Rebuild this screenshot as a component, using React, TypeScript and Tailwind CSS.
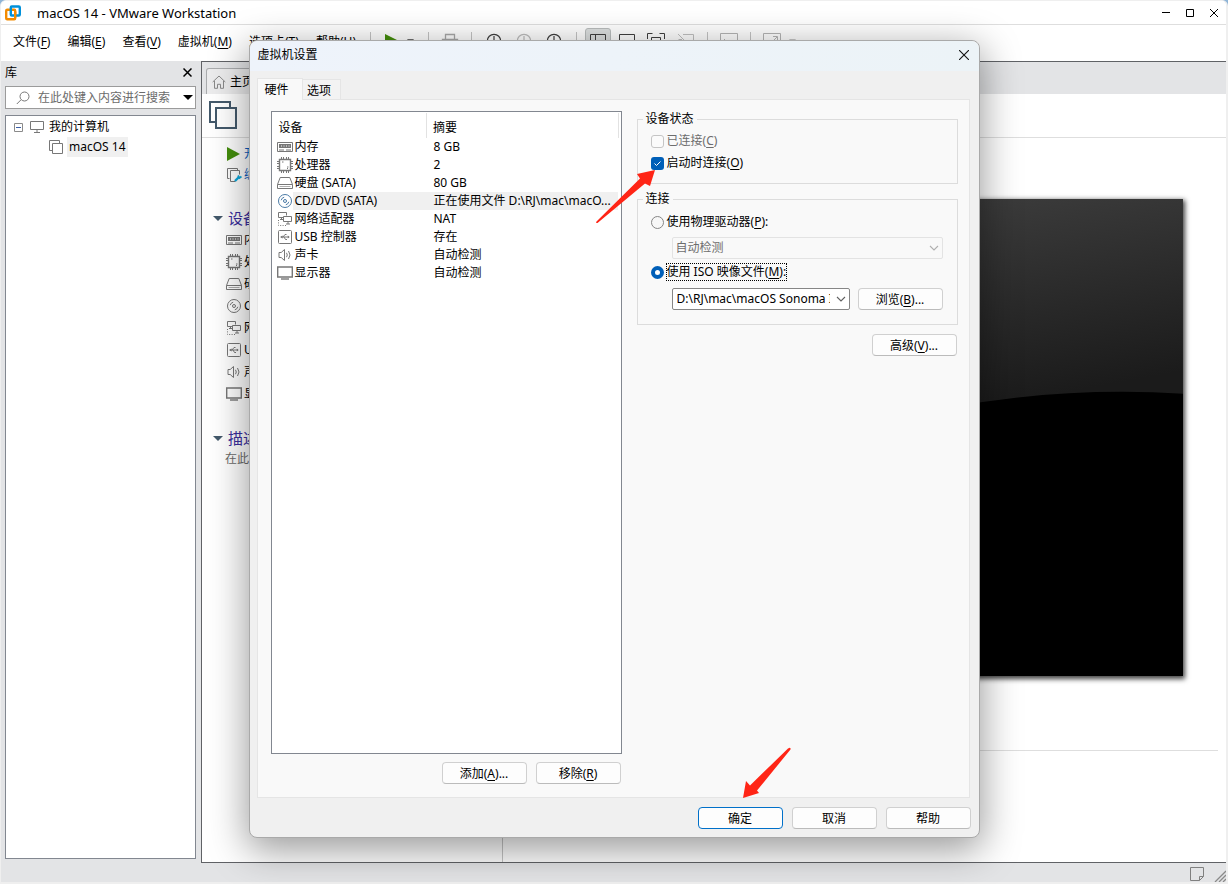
import type { ReactNode } from "react";

type DeviceKind = "memory" | "cpu" | "disk" | "cd" | "network" | "usb" | "sound" | "display";

interface Device {
  kind: DeviceKind;
  name: string;
  summary: string;
}

const devices: Device[] = [
  { kind: "memory", name: "内存", summary: "8 GB" },
  { kind: "cpu", name: "处理器", summary: "2" },
  { kind: "disk", name: "硬盘 (SATA)", summary: "80 GB" },
  { kind: "cd", name: "CD/DVD (SATA)", summary: "正在使用文件 D:\\RJ\\mac\\macO..." },
  { kind: "network", name: "网络适配器", summary: "NAT" },
  { kind: "usb", name: "USB 控制器", summary: "存在" },
  { kind: "sound", name: "声卡", summary: "自动检测" },
  { kind: "display", name: "显示器", summary: "自动检测" },
];

const menus = [
  { label: "文件", hotkey: "F" },
  { label: "编辑", hotkey: "E" },
  { label: "查看", hotkey: "V" },
  { label: "虚拟机", hotkey: "M" },
  { label: "选项卡", hotkey: "T" },
  { label: "帮助", hotkey: "H" },
];

function Hotkey({ label, hotkey, tail = "" }: { label: string; hotkey: string; tail?: string }) {
  return (
    <span className="whitespace-nowrap">
      {label}(<u className="underline-offset-2">{hotkey}</u>){tail}
    </span>
  );
}

function DeviceIcon({ kind }: { kind: DeviceKind }) {
  const shapes: Record<DeviceKind, ReactNode> = {
    memory: (
      <>
        <path d="M.5 3.5h15v9H.5z" />
        <path d="M2 5h12v4H2z" fill="currentColor" stroke="none" />
        <path d="M4 7h1m1.500 0h1m1.500 0h1m1.500 0h1" stroke="#fff" />
        <path d="M2 11h5m2 0h5" />
      </>
    ),
    cpu: (
      <>
        <path d="M2.500 2.500h11v11h-11z" strokeWidth="1.400" />
        <path d="M4.500 0v2m2-2v2m3-2v2m2-2v2m-7 12v2m2-2v2m3-2v2m2-2v2M0 4.500h2m-2 2h2m-2 3h2m-2 2h2m12-7h2m-2 2h2m-2 3h2m-2 2h2" />
        <path d="M5 5h1.500M10 10h1.500M10 11.500h1" />
      </>
    ),
    disk: (
      <>
        <path d="M3.200 2.500h9.600l2.700 7v4H.5v-4z" />
        <path d="M.5 9.500h15" />
        <path d="M2.500 11.500h11" opacity=".6" />
      </>
    ),
    cd: (
      <>
        <circle cx="8" cy="8" r="6.500" />
        <circle cx="8" cy="8" r="1.500" />
        <path d="M4.200 7.200a4 4 0 0 1 3-3M11.800 8.800a4 4 0 0 1-3 3" />
      </>
    ),
    network: (
      <>
        <path d="M6.500 6.500h-5v-5h8v3M3 8.500h3M4.500 6.500v2" />
        <path d="M6.500 5.500h8v5h-8zM9 13h4m-2-2.500V13" />
        <path d="M1.500 9v5.500H10" strokeDasharray="1 1.400" />
      </>
    ),
    usb: (
      <>
        <rect x="1.500" y="1.500" width="13" height="13" rx="1" />
        <path d="M4 8h8M6 8l2-2.500h1.500M7 8l1.500 2.500H10" />
        <path d="M5.600 6.600v2.800L3 8zM10.800 6.600v2.800l1.900-1.400z" fill="currentColor" stroke="none" />
      </>
    ),
    sound: (
      <>
        <path d="M2 5.500h2.200l3.300-3v11l-3.300-3H2z" />
        <path d="M9.500 5.800q1.600 2.200 0 4.400M11.500 4q3 4 0 8" />
      </>
    ),
    display: (
      <>
        <path d="M.7 2h14.600v10H.7z" strokeWidth="1.400" />
        <path d="M4 14h8" strokeWidth="1.400" />
      </>
    ),
  };

  return (
    <svg viewBox="0 0 16 16" className="size-4 shrink-0" fill="none" stroke="currentColor">
      {shapes[kind]}
    </svg>
  );
}

function StackIcon({ className }: { className: string }) {
  return (
    <svg viewBox="0 0 14 14" className={className} fill="none" stroke="currentColor">
      <path d="M3 10.500H.5V.5h10V3" />
      <path d="M3.500 3.500h10v10h-10z" />
    </svg>
  );
}

function Chevron({ className }: { className: string }) {
  return (
    <svg viewBox="0 0 10 6" className={className} fill="none" stroke="currentColor" strokeWidth="1.100">
      <path d="M1 1l4 4 4-4" />
    </svg>
  );
}

function Caret({ className }: { className: string }) {
  return (
    <svg viewBox="0 0 10 5" className={className} fill="currentColor">
      <path d="M0 0h10L5 5z" />
    </svg>
  );
}

function Divider() {
  return <span className="h-[18px] w-px shrink-0 bg-[#c4c4c4]" />;
}

function ClockIcon({ className }: { className: string }) {
  return (
    <svg viewBox="0 0 16 16" className={className} fill="none" stroke="currentColor" strokeWidth="1.200">
      <circle cx="8" cy="8" r="6.700" />
      <path d="M8 3v5h3" />
    </svg>
  );
}

function Toolbar() {
  return (
    <div className="flex items-center overflow-hidden pb-0.5 text-[#3f3f3f]">
      <Divider />
      <button aria-label="播放" className="ml-3.5 flex items-center gap-2">
        <svg viewBox="0 0 14 16" className="h-4 w-3.5 text-[#448f0c]" fill="currentColor">
          <path d="M0 1l14 7-14 7z" />
        </svg>
        <Caret className="h-1 w-[7px]" />
      </button>
      <span className="w-3.5" />
      <Divider />
      <button aria-label="发送按键" className="mx-3 text-[#a8a8a8]">
        <svg viewBox="0 0 18 16" className="h-4 w-[18px]" fill="none" stroke="currentColor" strokeWidth="1.300">
          <path d="M4.500 6V1.500h9V6M1.500 13V6.500h15V13z" />
        </svg>
      </button>
      <Divider />
      <div className="mx-3.5 flex gap-3.5">
        <button aria-label="拍摄快照"><ClockIcon className="size-4" /></button>
        <button aria-label="恢复快照" className="text-[#bdbdbd]"><ClockIcon className="size-4" /></button>
        <button aria-label="管理快照"><ClockIcon className="size-4" /></button>
      </div>
      <Divider />
      <button aria-label="显示库" className="mx-2 flex h-[27px] w-[26px] items-center justify-center rounded-[3px] border border-[#b9bdbd] bg-[#dcdfdf]">
        <svg viewBox="0 0 16 14" className="h-3.5 w-4" fill="none" stroke="currentColor">
          <path d="M.5.500h15v13H.5zM5.500.500v13" />
        </svg>
      </button>
      <button aria-label="缩略图栏">
        <svg viewBox="0 0 16 14" className="h-3.5 w-4" fill="none" stroke="currentColor">
          <path d="M.5.500h15v13H.5z" />
        </svg>
      </button>
      <button aria-label="全屏" className="ml-3">
        <svg viewBox="0 0 18 16" className="h-4 w-[18px]" fill="none" stroke="currentColor">
          <path d="M.5 6V.500h5M12.500.500h5V6M.5 10v5.500h5M12.500 15.500h5V10M4.500 4.500h9v7h-9z" />
        </svg>
      </button>
      <button aria-label="Unity" className="ml-3 text-[#c0c0c0]">
        <svg viewBox="0 0 18 16" className="h-4 w-[18px]" fill="none" stroke="currentColor">
          <path d="M6 1.500h10.500v9M1 1l14 14M1.500 6.500v8h9M2 6.500h3" />
        </svg>
      </button>
      <span className="w-3" />
      <Divider />
      <button aria-label="控制台" className="mx-3 text-[#b5b5b5]">
        <svg viewBox="0 0 18 16" className="h-4 w-[18px]" fill="none" stroke="currentColor">
          <path d="M.5.500h17v15H.5zM4 6l3 3-3 3" />
        </svg>
      </button>
      <Divider />
      <button aria-label="拉伸" className="ml-3 flex items-center gap-2 text-[#b5b5b5]">
        <svg viewBox="0 0 18 16" className="h-4 w-[18px]" fill="none" stroke="currentColor">
          <path d="M.5.500h17v15H.5zM10 3.500h4.500V8M14 4L9 9" />
        </svg>
        <Caret className="h-1 w-[7px]" />
      </button>
    </div>
  );
}

function TitleBar() {
  return (
    <header className="flex h-6 items-center border-b border-[#dedede] bg-white pr-2 pl-1">
      <svg viewBox="0 0 16 16" className="size-4" fill="none" strokeWidth="2.400">
        <rect x="1.200" y="4.800" width="9" height="9.500" rx="1" stroke="#f38b00" />
        <rect x="5.800" y="1.500" width="9" height="9" rx="1" stroke="#0091da" />
        <path d="M10.200 6.500v6" stroke="#f38b00" />
      </svg>
      <h1 className="ml-4 flex-1 text-[13px]">macOS 14 - VMware Workstation</h1>
      <div className="flex gap-4">
        <button aria-label="最小化">
          <svg viewBox="0 0 8 8" className="size-2" stroke="#000"><path d="M0 3.500h8" /></svg>
        </button>
        <button aria-label="最大化">
          <svg viewBox="0 0 8 8" className="size-2" fill="none" stroke="#000"><path d="M.5.500h7v7h-7z" /></svg>
        </button>
        <button aria-label="关闭">
          <svg viewBox="0 0 8 8" className="size-2" stroke="#000"><path d="M0 0l8 8M8 0L0 8" /></svg>
        </button>
      </div>
    </header>
  );
}

function Sidebar() {
  return (
    <aside className="flex w-[200px] shrink-0 flex-col bg-[#e3e4e6] pr-[5px] pb-1 pl-1">
      <div className="flex h-[25px] items-center justify-between pr-1 pb-0.5">
        <h2>库</h2>
        <button aria-label="关闭库">
          <svg viewBox="0 0 9 9" className="size-[9px]" stroke="#000" strokeWidth="1.500"><path d="M.5.500l8 8M8.500.500l-8 8" /></svg>
        </button>
      </div>
      <div className="flex h-[23px] items-center border border-[#9b9b9b] bg-white pr-0.5 pl-2.5">
        <svg viewBox="0 0 14 14" className="size-3.5 shrink-0" fill="none" stroke="#777">
          <circle cx="8.500" cy="5.500" r="4.500" />
          <path d="M5 8.800L.8 13" />
        </svg>
        <input
          aria-label="搜索"
          placeholder="在此处键入内容进行搜索"
          className="ml-2 min-w-0 flex-1 bg-transparent outline-none placeholder:text-[#6b6b6b]"
        />
        <Caret className="h-[5px] w-2.5 shrink-0" />
      </div>
      <ul className="mt-1.5 flex-1 border border-[#828790] bg-white pt-px">
        <li className="flex h-5 items-center pl-2">
          <svg viewBox="0 0 9 9" className="size-[9px]" fill="none" stroke="#8a8a8a">
            <path d="M.5.500h8v8h-8z" />
            <path d="M2 4.500h5" stroke="#3b5fa8" />
          </svg>
          <svg viewBox="0 0 14 12" className="ml-[7px] h-3 w-3.5" fill="none" stroke="#777">
            <path d="M.5.500h13v8H.5zM7 8.500v3M4 11.500h6" />
          </svg>
          <span className="ml-[5px]">我的计算机</span>
        </li>
        <li className="flex h-5 items-center pl-[43px]">
          <StackIcon className="size-3.5 text-[#777]" />
          <span className="ml-1 bg-[#f0f0f0] px-0.5 leading-5">macOS 14</span>
        </li>
      </ul>
    </aside>
  );
}

function Workspace() {
  return (
    <main className="flex min-w-0 flex-1 flex-col border-y border-l border-[#606266] bg-white">
      <div className="flex h-8 items-end bg-[#e3e4e6] pl-1">
        <a href="#home" className="flex h-[26px] w-[90px] items-center gap-1 rounded-t-[3px] border border-b-0 border-[#aaacae] bg-[#ececed] pl-[5px]">
          <svg viewBox="0 0 14 14" className="size-3.5" fill="none" stroke="#888">
            <path d="M.7 7L7 1l6.300 6M2.500 6v7.300h3v-4h3v4h3V6" />
          </svg>
          <span>主页</span>
        </a>
      </div>
      <div className="flex h-11 items-center border-b border-[#dedede] pb-0.5 pl-[7px]">
        <StackIcon className="size-7 text-[#43596b]" />
      </div>
      <div className="flex flex-1">
        <section className="w-[301px] shrink-0 border-r border-[#c6c6c6] pt-[5px]">
          <div className="flex flex-col pl-6 text-[#0b5cc0]">
            <a href="#power-on" className="flex h-[21px] items-center gap-1">
              <svg viewBox="0 0 14 14" className="size-3.5 text-[#448f0c]" fill="currentColor"><path d="M1 0l13 7-13 7z" /></svg>
              开启此虚拟机
            </a>
            <a href="#edit" className="flex h-[21px] items-center gap-0.5">
              <svg viewBox="0 0 16 16" className="size-4" fill="none" stroke="#777">
                <path d="M3.500 11.500h-2v-10h10v2M9.500 14.500h-5v-11h9v4" />
                <path d="M9 14l4-4" stroke="#0aa7dc" strokeWidth="2.400" />
                <path d="M12 8.500l1.500 2.500 2-1.500" stroke="#0aa7dc" strokeWidth="1.800" />
              </svg>
              编辑虚拟机设置
            </a>
          </div>
          <h2 className="mt-[22px] flex h-[22px] items-center gap-[5px] pl-[11px] text-[15px] text-[#3b2f9e]">
            <Caret className="h-[5px] w-2.5 text-[#43596b]" />
            设备
          </h2>
          <ul className="pl-6 text-[#777]">
            {devices.map((device) => (
              <li key={device.kind} className="flex h-[22px] items-center gap-0.5">
                <DeviceIcon kind={device.kind} />
                <span className="text-black">{device.name}</span>
              </li>
            ))}
          </ul>
          <h2 className="mt-[22px] flex h-[22px] items-center gap-[5px] pl-[11px] text-[15px] text-[#3b2f9e]">
            <Caret className="h-[5px] w-2.5 text-[#43596b]" />
            描述
          </h2>
          <p className="pl-[23px] leading-5 text-[#6b6b6b]">在此处键入对该虚拟机的描述。</p>
        </section>
        <section className="min-w-0 flex-1">
          <div className="mr-[43px] ml-11 pt-[61px]">
            <svg viewBox="0 0 637 478" className="w-full shadow-[1px_2px_5px_1px_rgba(0,0,0,0.75)]">
              <defs>
                <linearGradient id="screen" x1="0.3" y1="0" x2="0.42" y2="0.5">
                  <stop offset="0" stopColor="#424242" />
                  <stop offset="1" stopColor="#1b1b1b" />
                </linearGradient>
              </defs>
              <path d="M0 0h637v478H0z" fill="url(#screen)" />
              <path d="M0 369Q288 193 576 193Q607 193 637 195V478H0z" />
            </svg>
          </div>
          <hr className="mt-[74px] mr-2 border-[#dedede]" />
        </section>
      </div>
    </main>
  );
}

function StatusBar() {
  return (
    <footer className="flex h-[19px] items-end justify-end gap-2.5 bg-[#e3e4e6]">
      <svg viewBox="0 0 14 14" className="mb-px size-3.5" fill="none" stroke="#808080">
        <path d="M.5.500h13v9l-4 4h-9zM13.500 9.500h-4v4" />
      </svg>
      <svg viewBox="0 0 12 12" className="size-3" stroke="#8a8a8a" strokeWidth="1.300">
        <path d="M1 12L12 1M5 12l7-7M9 12l3-3" />
      </svg>
    </footer>
  );
}

function DialogButton({ children, primary = false }: { children: ReactNode; primary?: boolean }) {
  return (
    <button
      className={
        primary
          ? "h-[22px] w-[85px] rounded-[4px] border border-[#0070c9] bg-[#fdfdfd] pt-0.5"
          : "h-[22px] w-[85px] rounded-[4px] border border-[#d0d0d0] border-b-[#bbb] bg-[#fdfdfd] pt-0.5"
      }
    >
      {children}
    </button>
  );
}

function DeviceTable() {
  return (
    <div className="h-[643px] border border-[#828790] bg-white pt-px pr-0.5">
      <table className="w-full table-fixed border-collapse text-left">
        <thead>
          <tr className="h-[25px]">
            <th className="w-[155px] border-r border-[#e2e2e2] pt-1 pl-[7px] font-normal">设备</th>
            <th className="border-r border-[#e2e2e2] pt-1 pl-1.5 font-normal">摘要</th>
          </tr>
        </thead>
        <tbody>
          {devices.map((device) => {
            const selected = device.kind === "cd";
            return (
              <tr key={device.kind} className="h-[18px]">
                <td className="p-0">
                  <div className="flex h-[18px] items-center pl-[5px]">
                    <span className={selected ? "text-[#4c7ba6]" : "text-[#777]"}>
                      <DeviceIcon kind={device.kind} />
                    </span>
                    <span className={selected ? "flex-1 bg-[#f0f0f0] pl-0.5 leading-[18px]" : "flex-1 pl-0.5 leading-[18px]"}>
                      {device.name}
                    </span>
                  </div>
                </td>
                <td className={selected ? "truncate bg-[#f0f0f0] py-0 pl-[7px]" : "truncate py-0 pl-[7px]"}>
                  {device.summary}
                </td>
              </tr>
            );
          })}
        </tbody>
      </table>
    </div>
  );
}

function DevicePane() {
  const radio = "size-[13px] shrink-0 appearance-none rounded-full";
  return (
    <div className="flex min-w-0 flex-1 flex-col">
      <fieldset className="border border-[#dcdcdc] pb-[9px] pl-[13px]">
        <legend className="-ml-2 px-[3px] leading-4">设备状态</legend>
        <label className="mt-[3px] flex h-[22px] items-center gap-[3px] text-[#6d6d6d]">
          <input type="checkbox" disabled className="size-[13px] appearance-none rounded-[3px] border border-[#c5c5c5] bg-[#fbfbfb]" />
          <Hotkey label="已连接" hotkey="C" />
        </label>
        <label className="flex h-[22px] items-center gap-[3px]">
          <span className="relative flex size-[13px]">
            <input type="checkbox" defaultChecked className="size-[13px] appearance-none rounded-[3px] bg-[#005fb8]" />
            <svg viewBox="0 0 13 13" className="pointer-events-none absolute inset-0" fill="none" stroke="#fff">
              <path d="M3.500 6.500l2 2 4-4" />
            </svg>
          </span>
          <Hotkey label="启动时连接" hotkey="O" />
        </label>
      </fieldset>

      <fieldset className="mt-[7px] border border-[#dcdcdc] pr-3.5 pb-3.5 pl-[13px]">
        <legend className="-ml-2 px-[3px] leading-4">连接</legend>
        <label className="mt-1 flex h-[22px] items-center gap-[3px]">
          <input type="radio" name="source" className={`${radio} border border-[#868686] bg-[#f7f7f7]`} />
          <Hotkey label="使用物理驱动器" hotkey="P" tail=":" />
        </label>
        <div className="relative mt-1 ml-[21px] flex items-center">
          <select
            disabled
            aria-label="物理驱动器"
            className="h-[22px] w-full appearance-none rounded-[2px] border border-[#e3e3e3] bg-[#f9f9f9] px-[3px] text-[#6d6d6d] opacity-100"
          >
            <option>自动检测</option>
          </select>
          <Chevron className="pointer-events-none absolute right-1 h-1.5 w-2.5 text-[#b0b0b0]" />
        </div>
        <label className="mt-1 flex h-[18px] items-center gap-0.5">
          <input type="radio" name="source" defaultChecked className={`${radio} border-4 border-[#005fb8] bg-white`} />
          <span className="border border-dotted border-black leading-4">
            <Hotkey label="使用 ISO 映像文件" hotkey="M" tail=":" />
          </span>
        </label>
        <div className="mt-[7px] ml-[21px] flex items-center gap-2">
          <div className="relative flex min-w-0 flex-1 items-center">
            <select
              aria-label="ISO 映像文件"
              className="h-[22px] w-full appearance-none rounded-[2px] border border-[#868686] bg-white pr-[19px] pl-1"
            >
              <option>D:\RJ\mac\macOS Sonoma ISO.iso</option>
            </select>
            <Chevron className="pointer-events-none absolute right-1 h-1.5 w-2.5 text-[#606060]" />
          </div>
          <DialogButton>
            <Hotkey label="浏览" hotkey="B" tail="..." />
          </DialogButton>
        </div>
      </fieldset>

      <div className="mt-[9px] flex justify-end pr-px">
        <DialogButton>
          <Hotkey label="高级" hotkey="V" tail="..." />
        </DialogButton>
      </div>
    </div>
  );
}

function SettingsDialog() {
  return (
    <div
      role="dialog"
      aria-label="虚拟机设置"
      className="relative w-[731px] rounded-lg border border-[#a9a9a9] bg-[#f0f0f0] shadow-[0_10px_38px_2px_rgba(0,0,0,0.4)]"
    >
      <div className="flex h-[30px] items-center justify-between rounded-t-lg bg-linear-to-r from-[#eef3fb] to-[#ecf3f7] pr-2.5 pb-0.5 pl-2">
        <h2>虚拟机设置</h2>
        <button aria-label="关闭">
          <svg viewBox="0 0 10 10" className="size-2.5" stroke="#111" strokeWidth="1.100"><path d="M0 0l10 10M10 0L0 10" /></svg>
        </button>
      </div>

      <div className="px-[7px] pt-[7px]">
        <div role="tablist" className="flex items-end">
          <button role="tab" aria-selected="true" className="z-10 -mb-px h-[22px] w-[46px] border border-b-0 border-[#e5e5e5] bg-[#f9f9f9] pr-1.5">硬件</button>
          <button role="tab" aria-selected="false" className="h-5 w-[38px] border border-b-0 border-l-0 border-[#e5e5e5] bg-[#f3f3f3] pt-0.5 pr-1">选项</button>
        </div>
        <div className="mr-0.5 flex border border-[#e5e5e5] bg-[#f9f9f9] pt-[11px] pr-[11px] pb-[13px] pl-[13px]">
          <div className="w-[351px] shrink-0">
            <DeviceTable />
            <div className="mt-2 flex justify-end gap-[9px] pr-px">
              <DialogButton>
                <Hotkey label="添加" hotkey="A" tail="..." />
              </DialogButton>
              <DialogButton>
                <Hotkey label="移除" hotkey="R" />
              </DialogButton>
            </div>
          </div>
          <div className="ml-[15px] flex min-w-0 flex-1">
            <DevicePane />
          </div>
        </div>
      </div>

      <div className="flex justify-end gap-[9px] px-2 pt-[9px] pb-2">
        <DialogButton primary>确定</DialogButton>
        <DialogButton>取消</DialogButton>
        <DialogButton>帮助</DialogButton>
      </div>

      {/* Red pointers over the dialog */}
      <svg viewBox="0 0 60 55" className="pointer-events-none absolute top-[128px] left-[346px] h-[55px] w-[60px]" fill="#ff2516">
        <path d="M59 1L54 17L49 14.500L1.500 54Q-.5 54.500.5 52.500L44 9.500L41 5z" />
      </svg>
      <svg viewBox="0 0 50 52" className="pointer-events-none absolute top-[706px] left-[492px] h-[52px] w-[50px]" fill="#ff2516">
        <path d="M1 51L4 34L8 38.500L46 1.500Q49 -.5 48.500 2.500L15 43.500L17 46z" />
      </svg>
    </div>
  );
}

export default function App() {
  return (
    <div className="relative bg-[#8fb4d6] font-['Noto_Sans','Noto_Sans_CJK_SC',sans-serif] text-[12px] leading-4 text-black">
      <div className="flex min-h-screen flex-col overflow-hidden rounded-t-md border border-r-2 border-b-2 border-[#efefef] bg-white">
        <TitleBar />
        <nav className="flex h-9 items-center gap-px pb-0.5 pl-1">
          {menus.map((menu) => (
            <button key={menu.hotkey} className="px-2">
              <Hotkey label={menu.label} hotkey={menu.hotkey} />
            </button>
          ))}
          <span className="w-1" />
          <Toolbar />
        </nav>
        <div className="flex flex-1">
          <Sidebar />
          <Workspace />
        </div>
        <StatusBar />
      </div>

      <div className="absolute inset-0 flex items-start justify-center overflow-hidden pt-10">
        <SettingsDialog />
      </div>
    </div>
  );
}
